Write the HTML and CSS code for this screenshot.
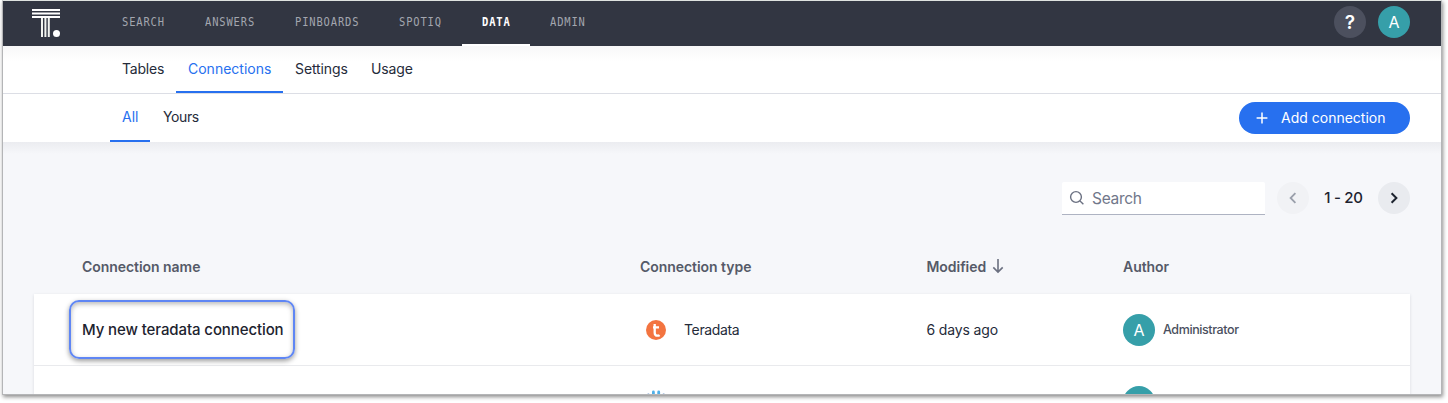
FILE: index.html
```html
<!DOCTYPE html>
<html lang="en">
<head>
<meta charset="utf-8">
<title>Connections</title>
<link rel="stylesheet" href="styles.css">
</head>
<body>
<div class="window">
  <header class="topbar">
    <svg class="logo" width="30" height="30" viewBox="0 0 30 30">
      <g fill="#fff">
        <path d="M1 1h28v2H1zM1 4.5h28v2H1zM1 8h28v2H1z"/>
        <path d="M10 10h2v19h-2zM13.4 10h2v19h-2zM16.8 10h2v19h-2z" fill="#f1f3ef"/>
        <circle cx="25.5" cy="25.4" r="3.5"/>
      </g>
    </svg>
    <nav class="nav">
      <a class="nav-item nav-6"><span>SEARCH</span></a>
      <a class="nav-item nav-7"><span>ANSWERS</span></a>
      <a class="nav-item nav-9"><span>PINBOARDS</span></a>
      <a class="nav-item nav-6"><span>SPOTIQ</span></a>
      <a class="nav-item nav-4 current"><span>DATA</span></a>
      <a class="nav-item nav-5"><span>ADMIN</span></a>
    </nav>
    <div class="tools">
      <span class="round help">?</span>
      <span class="round avatar">A</span>
    </div>
  </header>
  <div class="tabs primary">
    <a class="tab t-tables">Tables</a>
    <a class="tab t-connections active">Connections</a>
    <a class="tab t-settings">Settings</a>
    <a class="tab t-usage">Usage</a>
  </div>
  <div class="tabs secondary">
    <a class="tab t-all active">All</a>
    <a class="tab t-yours">Yours</a>
    <button class="add"><svg width="12" height="12" viewBox="0 0 12 12"><path d="M6 .6v10.8M.6 6h10.8" stroke="#fff" stroke-width="1.5"/></svg><span>Add connection</span></button>
  </div>
  <main class="content">
    <div class="toolbar">
      <div class="search">
        <svg width="16" height="16" viewBox="0 0 16 16" fill="none" stroke="#6b7182" stroke-width="1.4"><circle cx="7" cy="7" r="5.4"/><path d="M11 11l3.4 3.3"/></svg>
        <span>Search</span>
      </div>
      <span class="round pager prev"><svg width="12" height="12" viewBox="0 0 12 12" fill="none" stroke="#9a9fab" stroke-width="1.8"><path d="M8.4 1.2L3.6 6l4.8 4.8"/></svg></span>
      <span class="range">1 - 20</span>
      <span class="round pager next"><svg width="12" height="12" viewBox="0 0 12 12" fill="none" stroke="#1d232f" stroke-width="2"><path d="M3.6 1.2L8.4 6l-4.8 4.8"/></svg></span>
    </div>
    <div class="row head">
      <div class="h-name">Connection name</div>
      <div class="h-type">Connection type</div>
      <div class="modified"><span>Modified</span><svg width="12" height="16" viewBox="0 0 12 16" fill="none" stroke="#6b7080" stroke-width="1.6"><path d="M6 1v13M1.3 9.4L6 14.1l4.7-4.7"/></svg></div>
      <div class="h-author">Author</div>
    </div>
    <div class="card">
      <div class="row">
        <div class="cell-name"><span class="callout">My new teradata connection</span></div>
        <div class="type">
          <svg width="20" height="20" viewBox="0 0 20 20"><circle cx="10" cy="10" r="10" fill="#f37440"/><path d="M8.7 4v8.7c0 2.1 1 3 2.8 3 .9 0 1.6-.2 2.1-.6M7 7.4h6" fill="none" stroke="#fff" stroke-width="2.3"/></svg>
          <span class="type-name">Teradata</span>
        </div>
        <div class="when">6 days ago</div>
        <div class="author"><span class="round avatar">A</span><span class="author-name">Administrator</span></div>
      </div>
      <div class="row second">
        <div></div>
        <div class="type">
          <svg width="20" height="24" viewBox="0 0 20 24" fill="none" stroke-linecap="round" stroke-width="2.8"><path d="M7.4 1.9v20M12.7 1.9v20" stroke="#4fb0e8"/><path d="M2.4 4.8v14M17.7 4.8v14" stroke="#5b88c4"/></svg>
        </div>
        <div></div>
        <div class="author"><span class="round avatar"></span></div>
      </div>
    </div>
  </main>
</div>
</body>
</html>
```
FILE: styles.css
```css
* { box-sizing: border-box; }
body {
  margin: 0;
  height: 403px;
  overflow: hidden;
  background: #fff;
  font-family: Inter, "Liberation Sans", sans-serif;
  font-size: 14px;
  color: #252b3a;
}
.window {
  width: 1440px;
  height: 395px;
  margin-left: 2px;
  overflow: hidden;
  border: 1px solid #b4b5b7;
  border-top-color: #dfe3e0;
  background: #f6f7fa;
  box-shadow: 1px 2px 4px rgba(0, 0, 0, .45);
}
.topbar {
  display: flex;
  height: 45px;
  padding: 0 31px 0 28px;
  background: #323642;
}
.logo { margin: 7px 41px 0 0; }
.nav { display: flex; }
.nav-item {
  display: flex;
  padding: 0 20px;
  line-height: 43px;
  font-family: "DejaVu Sans Mono", monospace;
  font-size: 12px;
  color: #a3a6af;
  border-bottom: 2px solid transparent;
}
.nav-item span {
  letter-spacing: 1px;
  transform: scaleX(.87);
  transform-origin: left;
}
.nav-4 { width: 68px; }
.nav-5 { width: 76px; }
.nav-6 { width: 83px; }
.nav-7 { width: 90px; }
.nav-9 { width: 104px; }
.nav-item.current { color: #fff; font-weight: bold; border-color: #fff; }
.tools { display: flex; gap: 12px; margin: 5px 0 0 auto; }
.round {
  display: flex;
  flex: none;
  align-items: center;
  justify-content: center;
  width: 32px;
  height: 32px;
  border-radius: 50%;
}
.help { background: #4c505e; color: #fff; font-size: 19px; font-weight: 600; }
.avatar { background: #369fa9; color: #fff; font-size: 16px; }
.tabs { display: flex; padding: 0 31px 0 107px; background: #fff; }
.primary {
  height: 48px;
  border-bottom: 1px solid #dcdee5;
  background: linear-gradient(#f7f7f8, #fff 16px);
}
.secondary { height: 48px; }
.tab { padding: 0 12px; line-height: 46px; border-bottom: 2px solid transparent; white-space: nowrap; }
.primary .tab { line-height: 45px; height: 47px; }
.tab.active { color: #2770ef; border-color: #2770ef; }
.t-tables { width: 66px; letter-spacing: -.2px; }
.t-connections { width: 107px; }
.t-settings { width: 76px; letter-spacing: -.1px; }
.t-usage { width: 66px; letter-spacing: -.1px; }
.t-all { width: 40px; }
.t-yours { padding-left: 13px; letter-spacing: -.4px; }
.add {
  display: flex;
  align-items: center;
  width: 171px;
  height: 32px;
  margin: 8px 0 0 auto;
  padding: 0 0 0 17px;
  gap: 13px;
  border: 0;
  border-radius: 16px;
  background: #2770ef;
  color: #fff;
  font: inherit;
}
.add span { padding-bottom: 2px; }
.content {
  padding: 40px 31px 0 31px;
  background: linear-gradient(#ebecf0, #f6f7fa 12px);
}
.toolbar { display: flex; justify-content: flex-end; align-items: flex-start; }
.search {
  display: flex;
  align-items: center;
  gap: 7px;
  width: 203px;
  height: 33px;
  margin-right: 12px;
  padding-left: 7px;
  background: #fff;
  border-bottom: 1px solid #aeb3c2;
  border-radius: 2px 2px 0 0;
  color: #71778a;
  font-size: 15.5px;
  letter-spacing: -.3px;
}
.prev { background: #f1f2f5; }
.next { background: #e9ebef; }
.range { width: 69px; text-align: center; line-height: 32px; font-weight: 500; font-size: 15px; letter-spacing: -.3px; color: #1d232f; }
.row {
  display: grid;
  grid-template-columns: 558px 286.5px 196.5px 1fr;
  align-items: center;
  height: 72px;
  padding-left: 48px;
}
.head { height: 32px; margin: 35px 0 12px; font-weight: 600; font-size: 14px; color: #555a68; letter-spacing: -.05px; }
.modified { display: flex; align-items: center; gap: 6px; }
.card { height: 110px; background: #fff; box-shadow: 0 1px 3px rgba(40, 50, 70, .14); }
.card .row { border-bottom: 1px solid #e9eaed; }
.cell-name { display: flex; margin-left: -13px; }
.callout {
  width: 226px;
  height: 59px;
  padding-left: 11px;
  line-height: 55px;
  border: 2px solid #5f86f4;
  border-radius: 10px;
  box-shadow: 0 2px 5px rgba(0, 0, 0, .4), inset 0 2px 5px rgba(0, 0, 0, .28);
  font-size: 15px;
  font-weight: 500;
  letter-spacing: -.1px;
  color: #1d232f;
  white-space: nowrap;
}
.type { display: flex; align-items: center; gap: 18px; padding-left: 6px; }
.type-name { letter-spacing: -.35px; }
.when { letter-spacing: -.15px; }
.author { display: flex; align-items: center; gap: 8px; }
.author-name { font-size: 12.5px; font-weight: 500; letter-spacing: -.4px; color: #4a4f5e; }
```
